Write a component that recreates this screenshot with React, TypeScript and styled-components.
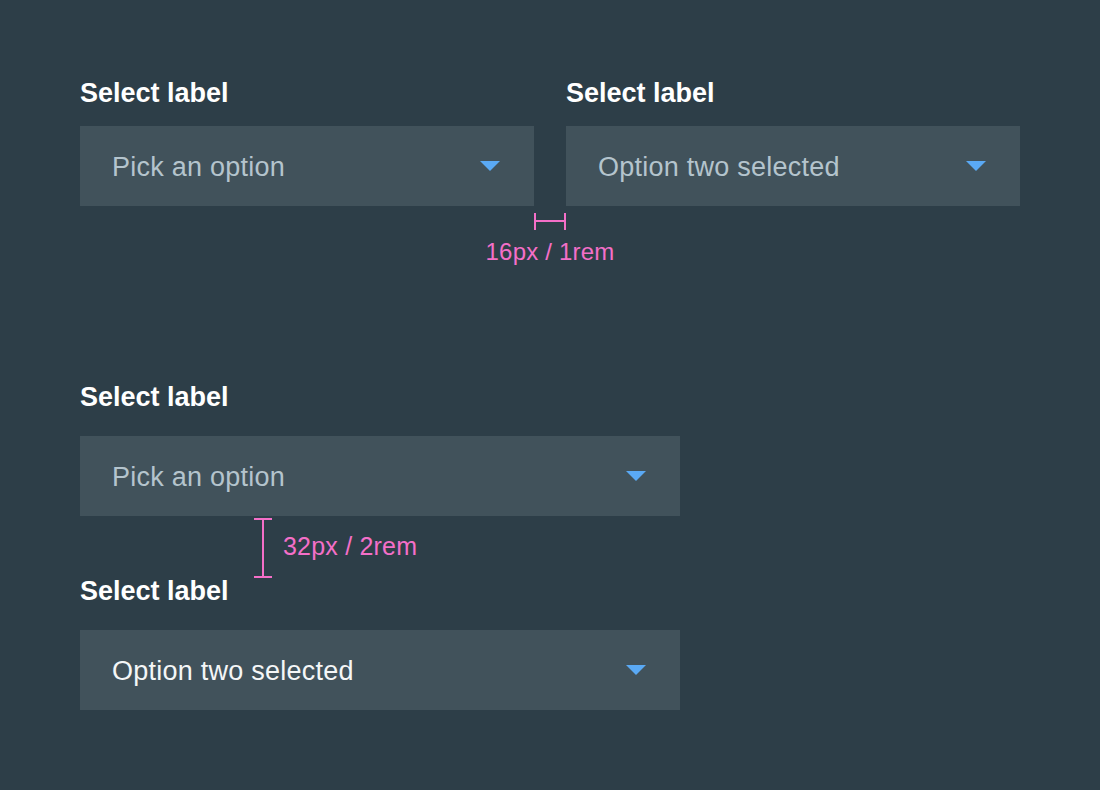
import React from "react";
import styled, { createGlobalStyle } from "styled-components";

const GlobalStyle = createGlobalStyle`
  html, body {
    margin: 0;
    padding: 0;
    background: #2d3e48;
  }
  body {
    font-family: "Liberation Sans", Arial, Helvetica, sans-serif;
    -webkit-font-smoothing: antialiased;
  }
`;

const Page = styled.div`
  width: 1100px;
  height: 790px;
  box-sizing: border-box;
  padding: 78px 80px 0;
  background: #2d3e48;
  overflow: hidden;
`;

const Row = styled.div`
  display: flex;
  gap: 32px;
`;

const Field = styled.div<{ $width: number; $labelGap: number }>`
  display: flex;
  flex-direction: column;
  width: ${(p) => p.$width}px;
  & > label {
    margin-bottom: ${(p) => p.$labelGap}px;
  }
`;

const Label = styled.label`
  font-size: 27px;
  line-height: 30px;
  font-weight: 700;
  color: #ffffff;
`;

const Box = styled.div`
  height: 80px;
  background: #41525b;
  display: flex;
  align-items: center;
  justify-content: space-between;
  padding: 0 34px 0 32px;
  box-sizing: border-box;
`;

const Value = styled.span<{ $selected?: boolean }>`
  font-size: 27px;
  line-height: 30px;
  padding-top: 2px;
  letter-spacing: 0.25px;
  color: ${(p) => (p.$selected ? "#f4f6f7" : "#b4c4cd")};
`;

const Caret = styled.span`
  width: 0;
  height: 0;
  border-left: 10px solid transparent;
  border-right: 10px solid transparent;
  border-top: 10px solid #5aa9f4;
`;

const HNote = styled.div`
  width: 940px;
  display: flex;
  flex-direction: column;
  align-items: center;
  padding-top: 7px;
`;

const HRuler = styled.div`
  position: relative;
  width: 32px;
  height: 17px;
  box-sizing: border-box;
  border-left: 2px solid #f46fc8;
  border-right: 2px solid #f46fc8;
  &::before {
    content: "";
    position: absolute;
    left: 0;
    right: 0;
    top: 7px;
    height: 2px;
    background: #f46fc8;
  }
`;

const NoteText = styled.span<{ $size: number }>`
  font-size: ${(p) => p.$size}px;
  line-height: 28px;
  color: #f46fc8;
  letter-spacing: 0.2px;
`;

const HNoteText = styled(NoteText)`
  margin-top: 8px;
`;

const Section = styled.div<{ $top: number }>`
  margin-top: ${(p) => p.$top}px;
`;

const VNote = styled.div`
  height: 60px;
  display: flex;
  align-items: center;
  gap: 11px;
  padding-left: 174px;
`;

const VRuler = styled.div`
  position: relative;
  width: 18px;
  height: 60px;
  margin-top: 4px;
  box-sizing: border-box;
  border-top: 2px solid #f46fc8;
  border-bottom: 2px solid #f46fc8;
  &::before {
    content: "";
    position: absolute;
    top: 0;
    bottom: 0;
    left: 8px;
    width: 2px;
    background: #f46fc8;
  }
`;

type SelectProps = {
  width: number;
  labelGap: number;
  value: string;
  selected?: boolean;
};

function Select({ width, labelGap, value, selected }: SelectProps) {
  return (
    <Field $width={width} $labelGap={labelGap}>
      <Label>Select label</Label>
      <Box>
        <Value $selected={selected}>{value}</Value>
        <Caret />
      </Box>
    </Field>
  );
}

export default function App() {
  return (
    <>
      <GlobalStyle />
      <Page>
        <Row>
          <Select width={454} labelGap={18} value="Pick an option" />
          <Select width={454} labelGap={18} value="Option two selected" />
        </Row>
        <HNote>
          <HRuler />
          <HNoteText $size={24}>16px / 1rem</HNoteText>
        </HNote>
        <Section $top={116}>
          <Select width={600} labelGap={24} value="Pick an option" />
          <VNote>
            <VRuler />
            <NoteText $size={25}>32px / 2rem</NoteText>
          </VNote>
          <Select width={600} labelGap={24} value="Option two selected" selected />
        </Section>
      </Page>
    </>
  );
}
